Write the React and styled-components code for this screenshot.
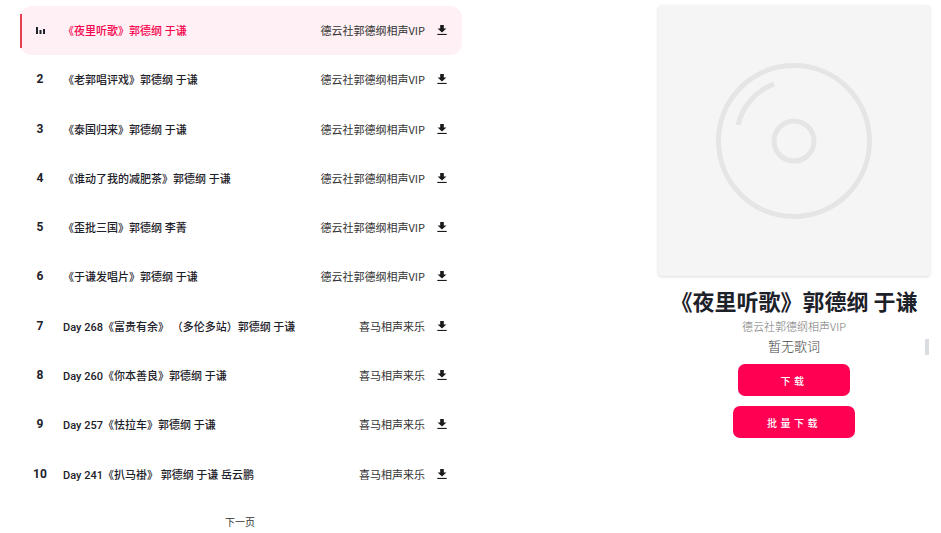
import React from 'react';
import styled, { createGlobalStyle } from 'styled-components';

const songs = [
  { title: '《夜里听歌》郭德纲 于谦', artist: '德云社郭德纲相声VIP' },
  { title: '《老郭唱评戏》郭德纲 于谦', artist: '德云社郭德纲相声VIP' },
  { title: '《泰国归来》郭德纲 于谦', artist: '德云社郭德纲相声VIP' },
  { title: '《谁动了我的减肥茶》郭德纲 于谦', artist: '德云社郭德纲相声VIP' },
  { title: '《歪批三国》郭德纲 李菁', artist: '德云社郭德纲相声VIP' },
  { title: '《于谦发唱片》郭德纲 于谦', artist: '德云社郭德纲相声VIP' },
  { title: 'Day 268《富贵有余》 （多伦多站）郭德纲 于谦', artist: '喜马相声来乐' },
  { title: 'Day 260《你本善良》郭德纲 于谦', artist: '喜马相声来乐' },
  { title: 'Day 257《怯拉车》郭德纲 于谦', artist: '喜马相声来乐' },
  { title: 'Day 241《扒马褂》 郭德纲 于谦 岳云鹏', artist: '喜马相声来乐' },
];

const FONT = 'Roboto, "Noto Sans CJK SC", sans-serif';
const CJK = '"Noto Sans CJK SC", sans-serif';

const GlobalStyle = createGlobalStyle`
  html, body {
    margin: 0;
    padding: 0;
    background: #fff;
    overflow: hidden;
  }
  body {
    font-family: ${FONT};
  }
`;

const Page = styled.div`
  width: 941px;
  height: 533px;
  display: flex;
  justify-content: space-between;
  overflow: hidden;
`;

const ListColumn = styled.div`
  width: 442px;
  margin-left: 20px;
  padding-top: 5.5px;
  display: flex;
  flex-direction: column;
`;

const Rows = styled.div`
  display: flex;
  flex-direction: column;
  gap: 0.3px;
`;

const Row = styled.div`
  position: relative;
  height: 49px;
  display: flex;
  align-items: center;
  border-radius: 12px;
  background: ${p => (p.$active ? '#fef0f4' : '#fff')};
  color: ${p => (p.$active ? '#f5044f' : '#1d2129')};

  &::before {
    content: ${p => (p.$active ? "''" : 'none')};
    position: absolute;
    left: 0;
    top: 8px;
    bottom: 7px;
    width: 2px;
    background: #e5404f;
  }
`;

const Index = styled.div`
  width: 40px;
  flex: none;
  text-align: center;
  font-size: 12px;
  font-weight: 700;
  color: #1d2129;
`;

const Title = styled.div`
  flex: 1;
  margin-left: 3px;
  font-size: 11px;
  font-weight: 500;
  white-space: nowrap;
`;

const Artist = styled.div`
  font-size: 11px;
  color: #333;
  white-space: nowrap;
  font-family: ${CJK};
  font-weight: 400;
`;

const DownloadIcon = styled.svg`
  width: 10px;
  height: 10px;
  margin: 0 15px 0 12px;
  flex: none;
  fill: #1a1a1a;
`;

const NextPage = styled.div`
  margin-top: 16px;
  margin-left: -2px;
  text-align: center;
  font-size: 10px;
  color: #333;
  font-family: ${CJK};
  font-weight: 400;
`;

const Detail = styled.div`
  width: 272px;
  margin-right: 11px;
  padding-top: 5px;
  display: flex;
  flex-direction: column;
  align-items: center;
`;

const Cover = styled.div`
  width: 272px;
  height: 271px;
  flex: none;
  border-radius: 4px;
  background: #f5f5f5;
  box-shadow: 0 1px 3px rgba(0, 0, 0, 0.14);
  display: flex;
  align-items: center;
  justify-content: center;
`;

const DiscSvg = styled.svg`
  width: 156px;
  height: 156px;
  fill: none;
  stroke: #e5e5e5;
  stroke-width: 5;
`;

const SongName = styled.h1`
  margin: 10px -20px 0;
  font-size: 22px;
  line-height: 28px;
  font-weight: 700;
  color: #1d2129;
  white-space: nowrap;
  font-family: ${CJK};
`;

const SongArtist = styled.div`
  margin-top: 3.5px;
  font-size: 11px;
  line-height: 16px;
  font-weight: 300;
  color: #777;
  font-family: ${CJK};
`;

const LyricsBox = styled.div`
  position: relative;
  align-self: stretch;
  height: 20px;
  margin-top: 2.5px;
  text-align: center;
  font-size: 13px;
  line-height: 20px;
  font-weight: 300;
  color: #444;
  font-family: ${CJK};
`;

const ScrollThumb = styled.div`
  position: absolute;
  right: 1px;
  top: 3px;
  width: 4px;
  height: 16px;
  background: #d9dce0;
`;

const Button = styled.button`
  display: block;
  width: ${p => p.$width}px;
  height: 32px;
  margin-top: ${p => p.$top}px;
  border: 0;
  border-radius: 7px;
  background: #ff0052;
  color: #fff;
  font-size: 10px;
  font-weight: 500;
  letter-spacing: 3.5px;
  font-family: ${CJK};
`;

const App = () => (
  <Page>
    <GlobalStyle />
    <ListColumn>
      <Rows>
        {songs.map((song, i) => (
          <Row key={song.title} $active={i === 0}>
            <Index>
              {i === 0 ? (
                <svg width="9" height="7" viewBox="0 0 9 7" fill="#1d2129">
                  <rect x="0" y="0" width="2" height="7" />
                  <rect x="3.5" y="3" width="2" height="4" />
                  <rect x="7" y="2" width="2" height="5" />
                </svg>
              ) : (
                i + 1
              )}
            </Index>
            <Title>{song.title}</Title>
            <Artist>{song.artist}</Artist>
            <DownloadIcon viewBox="0 0 10 10">
              <path d="M3.2 0h3.6v3.4H9.4L5 7.6 0.6 3.4h2.6z" />
              <rect x="0.3" y="8.9" width="9.4" height="1.1" />
            </DownloadIcon>
          </Row>
        ))}
      </Rows>
      <NextPage>下一页</NextPage>
    </ListColumn>
    <Detail>
      <Cover>
        <DiscSvg viewBox="0 0 156 156">
          <circle cx="78" cy="78" r="75.5" />
          <circle cx="78" cy="78" r="20" />
          <path d="M22 62 A58 58 0 0 1 58 21" />
        </DiscSvg>
      </Cover>
      <SongName>《夜里听歌》郭德纲 于谦</SongName>
      <SongArtist>德云社郭德纲相声VIP</SongArtist>
      <LyricsBox>
        暂无歌词
        <ScrollThumb />
      </LyricsBox>
      <Button $width={112} $top={8}>下载</Button>
      <Button $width={122} $top={10}>批量下载</Button>
    </Detail>
  </Page>
);

export default App;
